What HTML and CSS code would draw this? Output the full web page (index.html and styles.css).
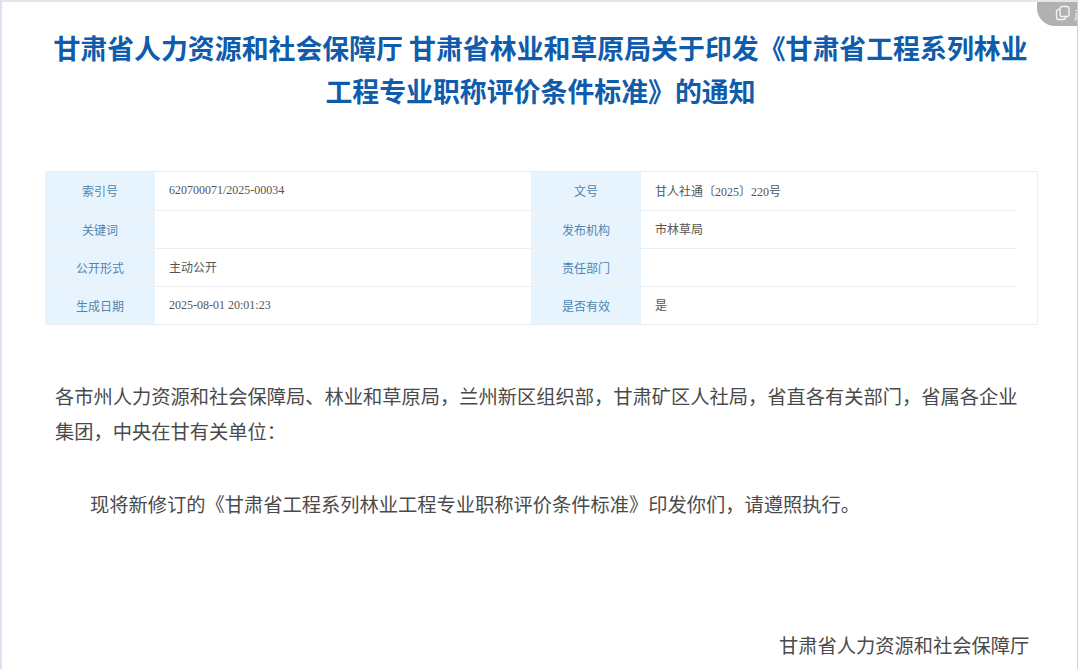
FILE: index.html
```html
<!DOCTYPE html>
<html lang="zh-CN">
<head>
<meta charset="utf-8">
<title>通知</title>
<link rel="stylesheet" href="styles.css">
</head>
<body>
<div class="page">
  <div class="pill">
    <svg class="pill-icon" width="16" height="16" viewBox="0 0 16 16" fill="none" stroke="#f4f4f4" stroke-width="1.3"><rect x="5" y="1.5" width="9" height="10" rx="2"/><path d="M5 4.5H3.5a2 2 0 0 0-2 2v6a2 2 0 0 0 2 2h5a2 2 0 0 0 2-2v-1"/></svg>
    <span class="pill-text">产</span>
  </div>
  <h1 class="title">甘肃省人力资源和社会保障厅 甘肃省林业和草原局关于印发《甘肃省工程系列林业工程专业职称评价条件标准》的通知</h1>
  <div class="meta-wrap">
    <table class="meta">
      <tr><th>索引号</th><td>620700071/2025-00034</td><th>文号</th><td>甘人社通〔2025〕220号</td></tr>
      <tr><th>关键词</th><td></td><th>发布机构</th><td>市林草局</td></tr>
      <tr><th>公开形式</th><td>主动公开</td><th>责任部门</th><td></td></tr>
      <tr><th>生成日期</th><td>2025-08-01 20:01:23</td><th>是否有效</th><td>是</td></tr>
    </table>
  </div>
  <div class="content">
    <p class="lead">各市州人力资源和社会保障局、林业和草原局，兰州新区组织部，甘肃矿区人社局，省直各有关部门，省属各企业集团，中央在甘有关单位：</p>
    <p class="indent">现将新修订的《甘肃省工程系列林业工程专业职称评价条件标准》印发你们，请遵照执行。</p>
    <p class="sign">甘肃省人力资源和社会保障厅</p>
  </div>
</div>
</body>
</html>
```
FILE: styles.css
```css
html, body {
  margin: 0;
  padding: 0;
  height: 669px;
  overflow: hidden;
  background: #fff;
}
.page {
  position: relative;
  box-sizing: border-box;
  width: 1078px;
  height: 669px;
  overflow: hidden;
  background: #fff;
  border-top: 2px solid #e6e6ea;
  border-left: 2px solid #dfe0f0;
  border-right: 1px solid #cfcfcf;
  font-family: "Liberation Serif", "Noto Sans CJK SC", serif;
}
.pill {
  position: absolute;
  top: -2px;
  left: 1035px;
  width: 60px;
  height: 26px;
  background: #b1b1b1;
  border-radius: 0 0 0 18px;
  display: flex;
  align-items: center;
  gap: 3px;
  padding-left: 18px;
  box-sizing: border-box;
}
.pill-text {
  font: 13px "Noto Sans CJK SC", sans-serif;
  color: #f4f4f4;
}
.title {
  margin: 0;
  padding: 24px 38px 0 40px;
  font: 700 26.9px/43px "Noto Sans CJK SC", sans-serif;
  color: #0f5bac;
  text-align: center;
}
.meta-wrap {
  box-sizing: border-box;
  width: 993px;
  margin: 59px 0 0 43px;
  padding-right: 20px;
  border: 1px solid #eaeef2;
  border-left: 0;
  border-radius: 2px;
}
.meta {
  width: 100%;
  table-layout: fixed;
  border-collapse: collapse;
  font-size: 12px;
}
.meta tr {
  height: 38px;
}
.meta th, .meta td {
  padding: 0;
  border-top: 1px solid #eaeff3;
  font-weight: 400;
}
.meta tr:first-child th, .meta tr:first-child td {
  border-top: 0;
}
.meta th {
  width: 110px;
  background: #e8f4fd;
  color: #4f86b0;
  text-align: center;
  font-family: "Noto Sans CJK SC", sans-serif;
}
.meta td {
  padding-left: 14px;
  color: #555;
  font-family: "Liberation Serif", "Noto Sans CJK SC", serif;
}
.content {
  font: 19.25px/35px "Noto Sans CJK SC", sans-serif;
  color: #4a4a4a;
}
.lead {
  margin: 54px 0 0 53px;
  width: 965px;
}
.indent {
  margin: 38px 0 0 88px;
}
.sign {
  margin: 106px 0 0 777px;
}
```
